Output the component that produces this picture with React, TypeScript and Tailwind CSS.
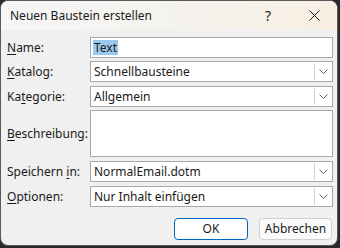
import React from "react";

const font = { fontFamily: '"Segoe UI", "Noto Sans", "Open Sans", sans-serif' };

function Chevron() {
  return (
    <svg width="9" height="5" viewBox="0 0 9 5" fill="none">
      <path d="M0.5 0.5 L4.5 4.5 L8.5 0.5" stroke="#606060" strokeWidth="1" />
    </svg>
  );
}

function Label({ pre, u, post }: { pre?: string; u: string; post?: string }) {
  return (
    <div className="w-[83px] shrink-0 text-[12px] text-[#1a1a1a] leading-none">
      {pre}
      <span className="underline underline-offset-2">{u}</span>
      {post}
    </div>
  );
}

function Combo({ value }: { value: string }) {
  return (
    <div className="flex h-[21px] flex-1 items-stretch border border-[#a8a8a8] bg-white">
      <div className="flex flex-1 items-center pl-[3px] text-[12px] text-[#1a1a1a]">{value}</div>
      <div className="my-[1px] mr-[1px] flex w-[17px] items-center justify-center border-l border-[#d0d0d0]">
        <Chevron />
      </div>
    </div>
  );
}

export default function App() {
  return (
    <div className="h-[248px] w-[340px] bg-[#2a2a2a]" style={font}>
      <div className="flex h-[246px] w-[338px] flex-col overflow-hidden rounded-[8px] border border-[#5a5a5a] bg-[#f0f0f0]">
        <div className="flex h-[29px] shrink-0 items-center bg-gradient-to-r from-[#f6f6f6] via-[#f5f3ef] to-[#f8efe2] pl-[9px]">
          <span className="flex-1 text-[12px] text-[#1a1a1a]">Neuen Baustein erstellen</span>
          <span className="w-[46px] text-center text-[14px] text-[#1a1a1a]">?</span>
          <span className="flex w-[46px] items-center justify-center">
            <svg width="11" height="11" viewBox="0 0 11 11">
              <path d="M0.5 0.5 L10.5 10.5 M10.5 0.5 L0.5 10.5" stroke="#1a1a1a" strokeWidth="1" />
            </svg>
          </span>
        </div>
        <div className="flex flex-col gap-[3px] pl-[6px] pr-[4px] pt-[7px]">
          <div className="flex items-center">
            <Label u="N" post="ame:" />
            <div className="flex h-[21px] flex-1 items-center border border-[#a8a8a8] bg-white pl-[2px] text-[12px] text-[#1a1a1a]">
              <span className="bg-[#99c9ef] px-[1px] leading-[15px]">Text</span>
            </div>
          </div>
          <div className="flex items-center">
            <Label u="K" post="atalog:" />
            <Combo value="Schnellbausteine" />
          </div>
          <div className="mt-[1px] flex items-center">
            <Label pre="Ka" u="t" post="egorie:" />
            <Combo value="Allgemein" />
          </div>
          <div className="flex items-center">
            <Label u="B" post="eschreibung:" />
            <div className="h-[47px] flex-1 border border-[#a8a8a8] bg-white" />
          </div>
          <div className="mt-[1px] flex items-center">
            <Label pre="Speichern " u="i" post="n:" />
            <Combo value="NormalEmail.dotm" />
          </div>
          <div className="mt-[1px] flex items-center">
            <Label u="O" post="ptionen:" />
            <Combo value="Nur Inhalt einfügen" />
          </div>
        </div>
        <div className="flex justify-end gap-[11px] pr-[5px] pt-[11px]">
          <button className="flex h-[22px] w-[74px] items-center justify-center rounded-[4px] border border-[#0067c0] bg-white text-[12px] text-[#1a1a1a]">
            OK
          </button>
          <button className="flex h-[22px] w-[73px] items-center justify-center rounded-[4px] border border-[#d0d0d0] bg-[#fbfbfb] text-[12px] text-[#1a1a1a]">
            Abbrechen
          </button>
        </div>
      </div>
    </div>
  );
}
